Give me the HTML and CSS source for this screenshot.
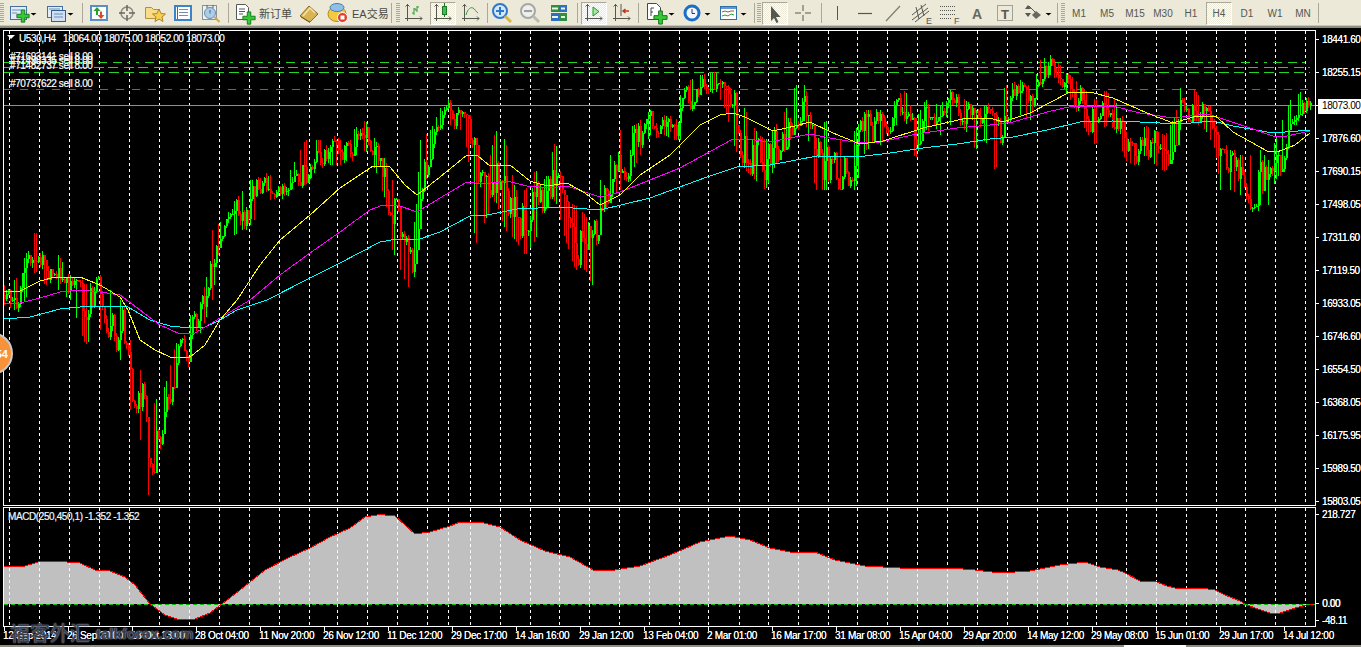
FILE: index.html
```html
<!DOCTYPE html>
<html lang="zh">
<head>
<meta charset="utf-8">
<title>U530,H4</title>
<link rel="stylesheet" href="styles.css">
</head>
<body>
<svg class="defs" width="0" height="0" aria-hidden="true">
  <defs>
    <symbol id="plus" viewBox="-1 -1 16 16"><path d="M5 0h4v5h5v4H9v5H5V9H0V5h5z" fill="#35c935" stroke="#15701a" stroke-width="1"/></symbol>
    <symbol id="axes" viewBox="0 0 24 24"><path d="M5.500 3v17M3 17.500h17M3.500 5.500l2-2 2 2M18 15.500l2 2-2 2" fill="none" stroke="#55584f" stroke-width="1"/></symbol>
  </defs>
</svg>

<header class="toolbar">
  <span class="grip"></span>
  <span class="split s-a">
    <svg class="ico" viewBox="0 0 24 24"><rect x="4.500" y="5.500" width="16" height="13" fill="#e3edf9" stroke="#44709f"/><path d="M6 9h9M6 12h5" stroke="#6f8fb0"/><use href="#plus" x="10" y="8" width="14" height="14"/></svg>
    <span class="caret"></span>
  </span>
  <span class="split s-b">
    <svg class="ico" viewBox="0 0 24 24"><rect x="4.500" y="5.500" width="15" height="11" fill="#e3edf9" stroke="#44709f"/><rect x="8.500" y="9.500" width="14" height="11" fill="#cfe0f4" stroke="#2f5f95"/><path d="M6 8h11M11 13h9M11 16h9" stroke="#6f8fb0"/></svg>
    <span class="caret"></span>
  </span>
  <span class="sep sep-7"></span>
  <span class="run m-2">
    <span class="btn"><svg class="ico" viewBox="0 0 24 24"><rect x="4" y="5" width="16" height="14" fill="#fff" stroke="#5b90c5" stroke-width="2"/><path d="M10 6l-3.500 4H9v4h2v-4h2.500z" fill="#2aa02a"/><path d="M14 18l3.500-4H15v-3.500h-2V14h-2.500z" fill="#d8492a"/></svg></span>
    <span class="btn"><svg class="ico" viewBox="0 0 24 24"><circle cx="12" cy="12" r="6" fill="none" stroke="#8a8a80" stroke-width="1.500"/><path d="M12 4v6M12 14v6M4 12h6M14 12h6" stroke="#66665e" stroke-width="1.500"/></svg></span>
    <span class="btn"><svg class="ico" viewBox="0 0 24 24"><path d="M2.500 6.500h6l2 2h6v9h-14z" fill="#f7dc8a" stroke="#b28f3a"/><path d="M16 8l2 4.500 4.500.5-3.500 3 1 4.500-4-2.400-4 2.400 1-4.500-3.500-3 4.500-.5z" fill="#f6cf4f" stroke="#a8842c"/></svg></span>
    <span class="btn"><svg class="ico" viewBox="0 0 24 24"><rect x="4" y="5" width="16" height="14" fill="#fff" stroke="#3d83c9" stroke-width="2"/><path d="M6.500 6v12" stroke="#2f6fb0"/><path d="M8 8.500h9M8 11.500h9M8 14.500h9" stroke="#7790a8"/></svg></span>
    <span class="btn"><svg class="ico" viewBox="0 0 24 24"><rect x="3.500" y="4.500" width="14" height="14" fill="#eef1f2" stroke="#8d9498"/><circle cx="11" cy="12" r="5.500" fill="#a9cdea" stroke="#6c8ca5"/><path d="M11 9v3.500M8 4v3M14 4v3" stroke="#4d6070"/><path d="M15.500 16l5 5" stroke="#c9a94e" stroke-width="2"/></svg></span>
  </span>
  <span class="sep sep-3"></span>
  <span class="labelled lab-a">
    <svg class="ico" viewBox="0 0 24 24"><path d="M4.500 3.500h9l3 3v12h-12z" fill="#fff" stroke="#55585a"/><path d="M7 8h6M7 10.500h6M7 13h4" stroke="#55585a"/><use href="#plus" x="10" y="10" width="14" height="14"/></svg>
    <span class="tb-text cjk t-new">新订单</span>
  </span>
  <span class="btn m-3"><svg class="ico" viewBox="0 0 24 24"><path d="M3 15l9-10 9 8-8 8z" fill="#d9b455" stroke="#8a6a24"/><path d="M6 15l7-8 5 5" fill="none" stroke="#f3e4a6" stroke-width="1.500"/><path d="M4 16l9 5.500" stroke="#7a5a1c"/></svg></span>
  <span class="labelled lab-b">
    <svg class="ico" viewBox="0 0 24 24"><ellipse cx="11" cy="13" rx="9" ry="7.500" fill="#f4c93f" stroke="#b18a20"/><ellipse cx="11" cy="6.500" rx="7" ry="4" fill="#8cc0e8" stroke="#4c7da8"/><circle cx="16.500" cy="16.500" r="5" fill="#e23b2a" stroke="#fff"/><rect x="14.500" y="14.500" width="4" height="4" fill="#fff"/></svg>
    <span class="tb-text cjk t-ea">EA交易</span>
  </span>
  <span class="sep sep-5"></span>
  <span class="grip g-4"></span>
  <span class="btn"><svg class="ico" viewBox="0 0 24 24"><use href="#axes" width="24" height="24"/><path d="M12 7v7M12 12h-2M12 8h2M15 5v6M15 9h-2M15 6h2" stroke="#2aa035" fill="none"/></svg></span>
  <span class="btn pressed m-1"><svg class="ico" viewBox="0 0 24 24"><use href="#axes" width="24" height="24"/><path d="M13.500 2v14" stroke="#1e7a28"/><rect x="11.500" y="5.500" width="4" height="8" fill="#39c44a" stroke="#1e7a28"/></svg></span>
  <span class="btn"><svg class="ico" viewBox="0 0 24 24"><use href="#axes" width="24" height="24"/><path d="M7 14c2-7 5-8 7-7s3 4 5 5" fill="none" stroke="#2aa035"/></svg></span>
  <span class="sep sep-2"></span>
  <span class="btn"><svg class="ico" viewBox="0 0 24 24"><circle cx="10" cy="10" r="7" fill="#d5e8fa" stroke="#2f78c9" stroke-width="2"/><path d="M6 10h8M10 6v8" stroke="#2f78c9" stroke-width="2"/><path d="M15 15l6 6" stroke="#d8b44a" stroke-width="3"/></svg></span>
  <span class="btn"><svg class="ico" viewBox="0 0 24 24"><circle cx="10" cy="10" r="7" fill="#eeeeea" stroke="#a4a8a8" stroke-width="2"/><path d="M6 10h8" stroke="#9a9e9e" stroke-width="2"/><path d="M15 15l6 6" stroke="#b8bab4" stroke-width="3"/></svg></span>
  <span class="btn m-1"><svg class="ico" viewBox="0 0 24 24"><rect x="4" y="4" width="8" height="7" fill="#2f8f3f"/><rect x="12" y="4" width="8" height="7" fill="#2f6fc0"/><rect x="4" y="12" width="8" height="8" fill="#2f6fc0"/><rect x="12" y="12" width="8" height="8" fill="#2f8f3f"/><path d="M5 7.500h6M14 7.500h4M5 16h6M14 16h4" stroke="#e8f4e8" stroke-width="2"/></svg></span>
  <span class="sep sep-4"></span>
  <span class="btn pressed m-2"><svg class="ico" viewBox="0 0 24 24"><use href="#axes" width="24" height="24"/><path d="M11 6l6 4.500-6 4.500z" fill="#a8e8a0" stroke="#1f9a2a"/></svg></span>
  <span class="btn"><svg class="ico" viewBox="0 0 24 24"><use href="#axes" width="24" height="24"/><path d="M11 3v12" stroke="#55584f"/><path d="M13 10h6M15.500 8l-2.500 2 2.500 2" fill="none" stroke="#b53a20" stroke-width="1.500"/></svg></span>
  <span class="sep sep-2"></span>
  <span class="split s-c">
    <svg class="ico" viewBox="0 0 24 24"><path d="M3.500 2.500h9l4 4v12h-13z" fill="#fff" stroke="#44484a"/><path d="M7 7v8M7 7h3M7 11h2" stroke="#44484a"/><use href="#plus" x="9" y="9" width="15" height="15"/></svg>
    <span class="caret"></span>
  </span>
  <span class="split s-c">
    <svg class="ico" viewBox="0 0 24 24"><circle cx="12" cy="12" r="7" fill="#f4f8fc" stroke="#1b6fc7" stroke-width="3"/><path d="M12 8v4.500h3" fill="none" stroke="#2a3a50"/></svg>
    <span class="caret"></span>
  </span>
  <span class="split s-c">
    <svg class="ico" viewBox="0 0 24 24"><rect x="4.500" y="5.500" width="16" height="13" fill="#fff" stroke="#2f6fa8"/><rect x="5" y="6" width="15" height="2" fill="#5d9ad0"/><path d="M6 11l3-1 3 1 3-1 3 0" fill="none" stroke="#c9442a"/><path d="M6 15l3-1 3 1 3-2 3 1" fill="none" stroke="#2aa035"/></svg>
    <span class="caret"></span>
  </span>
  <span class="sep sep-7"></span>
  <span class="grip g-2"></span>
  <span class="btn pressed"><svg class="ico" viewBox="0 0 24 24"><path d="M8 5v15l3-3 2.500 5 2-1-2.500-5h4.500z" fill="#55584f"/></svg></span>
  <span class="btn"><svg class="ico" viewBox="0 0 24 24"><path d="M12 4v6M12 14v6M4 12h6M14 12h6" stroke="#55584f"/></svg></span>
  <span class="sep sep-4"></span>
  <span class="run m-1">
    <span class="btn"><svg class="ico" viewBox="0 0 24 24"><path d="M12.500 5v14" stroke="#55584f"/></svg></span>
    <span class="btn"><svg class="ico" viewBox="0 0 24 24"><path d="M5 12.500h14" stroke="#55584f" stroke-width="1.200"/></svg></span>
    <span class="btn"><svg class="ico" viewBox="0 0 24 24"><path d="M5 20L19 5" stroke="#7a7d74" stroke-width="1.200"/></svg></span>
    <span class="btn"><svg class="ico" viewBox="0 0 24 24"><path d="M3 14L17 3M3 19L19 7M6 21l14-11M7 6l3 12M12 4l3 11" stroke="#55584f" fill="none"/><text class="ico-letter" x="17" y="22.500">E</text></svg></span>
    <span class="btn"><svg class="ico" viewBox="0 0 24 24"><path d="M3 5.500h15M3 9.500h15M3 13.500h15M3 17.500h11" stroke="#55584f" stroke-dasharray="1 1"/><text class="ico-letter" x="17" y="22.500">F</text></svg></span>
    <span class="btn"><svg class="ico" viewBox="0 0 24 24"><text class="ico-a" x="12" y="18">A</text></svg></span>
    <span class="btn"><svg class="ico" viewBox="0 0 24 24"><rect x="4.500" y="4.500" width="15" height="15" fill="none" stroke="#55584f" stroke-dasharray="1 1"/><text class="ico-t" x="12" y="18">T</text></svg></span>
  </span>
  <span class="split s-d">
    <svg class="ico" viewBox="0 0 24 24"><path d="M4 8l3-4 3 4zM4 12l3 4 3-4z" fill="#55584f"/><path d="M8 5l8 8" stroke="#55584f"/><path d="M15 10l5 4-5 4-4-4z" fill="#66695f"/></svg>
    <span class="caret"></span>
  </span>
  <span class="sep sep-5"></span>
  <span class="grip g-3"></span>
  <nav class="periods">
    <span class="btn per">M1</span>
    <span class="btn per">M5</span>
    <span class="btn per">M15</span>
    <span class="btn per">M30</span>
    <span class="btn per">H1</span>
    <span class="btn per pressed">H4</span>
    <span class="btn per">D1</span>
    <span class="btn per">W1</span>
    <span class="btn per">MN</span>
  </nav>
  <span class="sep sep-1"></span>
</header>

<main class="terminal">
  <section class="row row-price">
    <div class="plot plot-price">
      <svg class="chart" id="price" viewBox="4 31 1311 474" width="1311" height="474">
        <g id="price-grid"></g>
        <path class="lvl lvl-a" d="M4 62.500H1310"/>
        <path class="lvl lvl-b" d="M4 67.500H1310"/>
        <path class="lvl lvl-c" d="M4 72.500H1310"/>
        <path class="lvl lvl-d" d="M4 89.500H1310"/>
        <path class="bid" d="M4 105.500H1315"/>
        <g id="candles"></g>
        <polyline class="ma ma-c" points="4,319 30,317 60,309 80,307 100,306 128,307 150,320 170,326 190,328 205,327 220,320 237,310 267,300 310,278 340,263 380,242 397,239 417,240 440,232 470,216 487,215 517,209 560,207 600,210 650,198 707,177 737,167 770,165 817,156 857,157 890,153 923,148 957,144 990,139 1013,137 1047,130 1080,122 1113,121 1140,122 1180,124 1213,121 1233,126 1273,133 1310,130"/>
        <polyline class="ma ma-m" points="4,303 20,303 40,298 60,292 80,290 100,292 120,295 140,310 160,325 180,334 195,333 220,318 250,300 280,275 310,253 340,232 370,210 383,205 397,205 417,212 440,198 467,182 483,184 507,181 527,186 550,188 567,186 600,197 620,192 680,168 733,139 747,139 770,142 810,134 830,138 860,143 880,142 917,134 957,128 990,125 1013,122 1047,112 1073,106 1113,106 1140,113 1173,118 1207,114 1220,118 1247,127 1273,136 1287,136 1310,131"/>
        <polyline class="ma ma-y" points="4,291 20,291 40,281 55,277 80,277 100,285 120,297 128,310 140,340 155,350 170,357 190,357 205,345 220,320 237,300 260,265 280,240 310,215 340,188 373,166 390,167 405,185 417,195 440,177 467,155 478,156 490,166 510,165 530,181 547,186 567,183 585,193 600,205 620,195 640,175 670,155 700,125 720,115 733,113 745,117 773,131 795,126 810,122 833,133 860,144 883,141 923,128 967,118 990,118 1003,122 1030,113 1070,92 1090,92 1113,98 1147,113 1173,123 1197,116 1217,117 1233,132 1267,151 1277,152 1295,145 1310,133"/>
        <text class="lab" x="19" y="41.500">U530,H4</text>
        <path class="tri" d="M7 35h8l-4 4z"/>
        <text class="lab" x="63" y="41.500">18064.00</text>
        <text class="lab" x="104" y="41.500">18075.00</text>
        <text class="lab" x="145" y="41.500">18052.00</text>
        <text class="lab" x="186" y="41.500">18073.00</text>
        <text class="lab" x="10" y="60">#71693141 sell 8.00</text>
        <text class="lab" x="10" y="64">#71498335 sell 8.00</text>
        <text class="lab" x="10" y="69">#71482737 sell 8.00</text>
        <text class="lab" x="10" y="87">#70737622 sell 8.00</text>
      </svg>
    </div>
    <ul class="axis axis-price">
      <li>18441.60</li><li>18255.15</li><li class="current">18073.00</li><li>17876.60</li><li>17690.15</li>
      <li>17498.05</li><li>17311.60</li><li>17119.50</li><li>16933.05</li><li>16746.60</li>
      <li>16554.50</li><li>16368.05</li><li>16175.95</li><li>15989.50</li><li>15803.05</li>
    </ul>
  </section>

  <section class="row row-macd">
    <div class="plot plot-macd">
      <svg class="chart" id="macd" viewBox="4 508 1311 118" width="1311" height="118">
        <polygon class="hist" points="4,604 4,566.500 18,566.500 25,566 40,561.500 60,561.500 80,563 95,570 110,571 125,577 135,585 150,604 165,615 180,620 195,619 210,613 222,604 240,590 265,570 290,557 310,548 330,537 350,528 365,517 380,514.500 395,516 405,525 415,534 430,532 450,526 460,522 480,522 500,527 520,540 545,551 570,557 595,571 615,570 640,566 670,555 700,542 730,536 750,540 770,548 790,552 815,552 835,560 865,566 900,568 950,568 975,570 1000,573 1030,571 1060,565 1085,562 1100,567 1118,570 1125,573 1140,581 1157,582 1167,586 1175,588 1190,589 1200,588 1215,590 1225,595 1240,601 1245,604 1255,608 1270,613 1280,613 1295,608 1310,604 1314,604"/>
        <g id="macd-grid"></g>
        <polyline class="hist-line" points="4,566.500 18,566.500 25,566 40,561.500 60,561.500 80,563 95,570 110,571 125,577 135,585 150,604 165,615 180,620 195,619 210,613 222,604 240,590 265,570 290,557 310,548 330,537 350,528 365,517 380,514.500 395,516 405,525 415,534 430,532 450,526 460,522 480,522 500,527 520,540 545,551 570,557 595,571 615,570 640,566 670,555 700,542 730,536 750,540 770,548 790,552 815,552 835,560 865,566 900,568 950,568 975,570 1000,573 1030,571 1060,565 1085,562 1100,567 1118,570 1125,573 1140,581 1157,582 1167,586 1175,588 1190,589 1200,588 1215,590 1225,595 1240,601 1245,604 1255,608 1270,613 1280,613 1295,608 1310,604 1314,604"/>
        <path class="zero" d="M4 604.500H1315"/>
        <text class="lab lab-macd" x="8" y="519.500">MACD(250,450,1) -1.352 -1.352</text>
      </svg>
    </div>
    <ul class="axis axis-macd">
      <li>218.727</li><li class="bold">0.00</li><li>-48.11</li>
    </ul>
  </section>

  <ol class="time-axis">
    <li>12 Sep 2014</li><li>26 Sep 20:00</li><li>13 Oct 13:00</li><li>28 Oct 04:00</li><li>11 Nov 20:00</li><li>26 Nov 12:00</li><li>11 Dec 12:00</li>
    <li>29 Dec 17:00</li><li>14 Jan 16:00</li><li>29 Jan 12:00</li><li>13 Feb 04:00</li><li>2 Mar 01:00</li><li>16 Mar 17:00</li><li>31 Mar 08:00</li>
    <li>15 Apr 04:00</li><li>29 Apr 20:00</li><li>14 May 12:00</li><li>29 May 08:00</li><li>15 Jun 01:00</li><li>29 Jun 17:00</li><li>14 Jul 12:00</li>
  </ol>

  <div class="tabstrip"><span class="tab-active"></span></div>

  <div class="badge">54</div>
  <div class="watermark"><span class="wm-cjk">福客外汇</span><span class="wm-lat">talkforex.com</span></div>
</main>
<script src="chart.js"></script>
</body>
</html>
```

FILE: styles.css
```css
* { box-sizing: border-box; }
html, body { margin: 0; height: 647px; overflow: hidden; background: #000; }
body { font-family: "Liberation Sans", Arial, sans-serif; }
.defs { position: absolute; }

/* toolbar */
.toolbar {
  display: flex; align-items: center; height: 28px;
  background: #ece9d8;
  border-bottom: 2px solid #8e8c7e;
  box-shadow: inset 0 -1px 0 #c9c6b6;
  color: #55584f;
}
.ico { width: 24px; height: 24px; display: block; flex: none; }
.grip {
  width: 4px; height: 20px; flex: none;
  background: repeating-linear-gradient(#aca899 0 1px, #ece9d8 1px 2px);
}
.g-4 { margin-left: 4px; }
.g-2 { margin-left: 2px; }
.g-3 { margin-left: 3px; }
.sep { width: 1px; height: 20px; background: #aca899; flex: none; }
.sep-1 { margin-left: 1px; }
.sep-2 { margin-left: 2px; }
.sep-3 { margin-left: 3px; }
.sep-4 { margin-left: 4px; }
.sep-5 { margin-left: 5px; }
.sep-7 { margin-left: 7px; }
.btn {
  width: 26px; height: 23px; margin: 0 1px; flex: none;
  display: flex; align-items: center; justify-content: center;
  border: 1px solid transparent;
}
.btn .ico { margin: -1px; }
.pressed {
  border-color: #aca899 #fff #fff #aca899;
  background: repeating-conic-gradient(#fff 0 25%, #ece9d8 0 50%) 0 0 / 2px 2px;
}
.btn.m-1 { margin-left: 2px; }
.run { display: flex; flex: none; }
.run.m-2 { margin-left: 2px; }
.run.m-1 { margin-left: 1px; }
.btn.m-2 { margin-left: 3px; }
.btn.m-3 { margin-left: 4px; }
.split { display: flex; align-items: center; flex: none; }
.s-a { margin-left: 2px; }
.s-b { margin-left: 5px; }
.s-c { margin-left: 5px; }
.s-d { margin-left: 2px; }
.caret {
  width: 7px; height: 3px; flex: none;
  background: #000;
  clip-path: polygon(0 0, 7px 0, 3.500px 100%);
  margin-top: 2px;
}
.s-a .caret, .s-b .caret { width: 8px; }
.labelled { display: flex; align-items: center; flex: none; }
.lab-a { margin-left: 3px; }
.lab-b { margin-left: 3px; }
.tb-text { font-size: 11px; color: #4a4a45; white-space: nowrap; }
.cjk { font-family: "Liberation Sans", "Noto Sans CJK SC", sans-serif; }
.t-new { margin-left: 3px; width: 33px; }
.t-ea { margin-left: 2px; width: 34px; }
.periods { display: flex; flex: none; }
.per { font-size: 10px; color: #55584f; }
.ico-letter { font: 9px "Liberation Sans", sans-serif; fill: #55584f; }
.ico-a { font: bold 14px "Liberation Sans", sans-serif; fill: #66695f; text-anchor: middle; }
.ico-t { font: bold 13px "Liberation Sans", sans-serif; fill: #55584f; text-anchor: middle; }

/* terminal */
.terminal { position: relative; height: 619px; padding: 2px 0 0 3px; overflow: hidden; }
.row { display: flex; }
.row-price { height: 476px; }
.row-macd { height: 120px; margin-top: 1px; }
.plot { width: 1313px; border: 1px solid #fff; flex: none; background: #000; }
.chart { display: block; overflow: hidden; }

.lvl { fill: none; stroke-width: 1; shape-rendering: crispEdges; }
.lvl-a { stroke: #22d322; stroke-dasharray: 9 6 9 5 3 6 3 6; }
.lvl-b { stroke: #22d322; stroke-dasharray: 10 4 10 6; }
.lvl-c { stroke: #22d322; stroke-dasharray: 10 5; }
.lvl-d { stroke: #229a22; stroke-dasharray: 8 8; }
.bid { stroke: #8f8f8f; stroke-width: 1; shape-rendering: crispEdges; }
.grid-line { stroke: #fff; stroke-width: 1; stroke-dasharray: 3 3; shape-rendering: crispEdges; fill: none; }
.ma { fill: none; stroke-width: 1; shape-rendering: crispEdges; }
.ma-y { stroke: #ffff00; }
.ma-m { stroke: #ff00ff; }
.ma-c { stroke: #00ffff; }
.tri { fill: #fff; }
.lab { font: 10px "Liberation Sans", sans-serif; letter-spacing: -.4px; fill: #fff; stroke: #fff; stroke-width: .2px; }
.lab-macd { fill: #e6f2ff; }
.up { stroke: #00ff00; }
.dn { stroke: #ff0000; }
.wick { stroke-width: 1; shape-rendering: crispEdges; fill: none; }
.body { stroke-width: 2; shape-rendering: crispEdges; fill: none; }
.hist { fill: #c0c0c0; }
.hist-line { fill: none; stroke: #ff0000; stroke-width: 1; shape-rendering: crispEdges; }
.zero { stroke: #00c000; stroke-width: 1; stroke-dasharray: 4 3; shape-rendering: crispEdges; }

/* axes */
.axis {
  list-style: none; margin: 0; padding: 0;
  color: #fff; font-size: 10px; letter-spacing: -.4px; line-height: 9px;
  flex: 1; min-width: 0; white-space: nowrap; text-shadow: 0 0 .6px #fff;
}
.axis li { display: flex; }
.axis li::before {
  content: ""; width: 3px; height: 1px; background: #fff; margin-right: 3px; flex: none; margin-top: 4px;
}
.axis-price { padding-top: 5px; }
.axis-price li { height: 33px; }
.axis-price li:last-child { height: 9px; }
.axis-price .current { position: relative; z-index: 1; }
.axis-price .current::after {
  content: "18073.00"; position: absolute; left: 2px; top: -2px; width: 44px; height: 13px;
  padding: 2px 0 0 4px; background: #fff; color: #000; text-shadow: none;
}
.axis-macd { padding-top: 3px; }
.axis-macd li:nth-child(1) { height: 89px; }
.axis-macd li:nth-child(2) { height: 17px; }
.axis-macd .bold { text-shadow: .6px 0 0 #fff; }

.time-axis {
  list-style: none; margin: 0; padding: 0; display: flex;
  color: #fff; font-size: 10px; letter-spacing: -.3px; line-height: 9px;
  height: 18px; white-space: nowrap; text-shadow: 0 0 .6px #fff;
}
.time-axis li { width: 64px; flex: none; }
.time-axis li::before { content: ""; display: block; width: 1px; height: 4px; background: #fff; margin-left: 1px; }

.tabstrip { height: 2px; margin-left: -3px; background: #8f8d80; display: flex; }
.tab-active { width: 62px; height: 2px; margin-left: 1124px; background: #fff; }

.badge {
  position: absolute; left: -30px; top: 304px; width: 43px; height: 43px;
  border-radius: 50%; background: #f7913a; border: 2px solid #c9c9c9;
  display: flex; align-items: center; justify-content: flex-end; padding-right: 3px;
  color: #fff; font: bold 11px "Liberation Sans", sans-serif;
}
.watermark {
  position: absolute; left: 10px; bottom: 1px; display: flex; align-items: flex-end; gap: 6px;
  color: #3a3c44; text-shadow: 0 0 1px #9aa8c4, 0 0 2px #6c7a96; white-space: nowrap; pointer-events: none;
}
.wm-cjk { font: 20px/26px "Noto Sans CJK SC", sans-serif; }
.wm-lat { font: bold 15px/18px "Liberation Sans", sans-serif; margin-bottom: 3px; }
```

FILE: chart.js
```js
(function () {
  var NS = "http://www.w3.org/2000/svg";
  var gridX = [9,39,69,99,129,159,189,219,249,279,309,337,367,397,427,448,470,500,530,559,589,619,649,679,708,739,768,798,828,857,887,917,947,977,1007,1037,1067,1096,1126,1156,1186,1216,1245,1275,1305];
  function el(parent, cls, d) {
    var p = document.createElementNS(NS, "path");
    p.setAttribute("class", cls);
    p.setAttribute("d", d);
    parent.appendChild(p);
  }
  function grid(id, y0, y1) {
    var g = document.getElementById(id);
    el(g, "grid-line", gridX.map(function (x) { return "M" + (x + .5) + " " + y0 + "V" + y1; }).join(""));
  }
  grid("price-grid", 31, 505);
  grid("macd-grid", 508, 626);

  /* hand-read price envelope of the reference: x, high, low */
  var env = [[4,285,305],[15,280,310],[25,255,300],[35,230,270],[45,262,285],[58,255,290],[70,275,300],[85,285,345],[100,275,330],[110,290,340],[120,300,360],[130,340,410],[140,370,440],[148,420,495],[155,400,470],[165,385,420],[175,345,385],[190,315,360],[205,285,320],[212,230,300],[220,222,240],[235,200,235],[250,180,225],[270,175,200],[290,170,190],[305,140,185],[320,140,165],[340,140,165],[355,128,155],[365,120,150],[375,140,170],[385,160,200],[392,180,250],[400,215,270],[408,235,287],[415,220,275],[420,140,200],[430,130,160],[440,108,130],[450,100,125],[460,110,130],[467,115,150],[475,140,245],[485,180,220],[495,130,200],[505,140,230],[515,190,240],[525,190,255],[535,170,240],[545,180,210],[555,140,200],[565,200,240],[575,205,270],[585,215,270],[592,230,285],[600,180,220],[610,155,200],[620,130,190],[635,125,165],[650,110,135],[665,115,135],[675,125,140],[680,95,140],[690,80,110],[700,75,92],[715,72,90],[725,85,110],[735,90,150],[745,110,170],[755,130,180],[765,140,190],[775,125,165],[785,110,150],[795,85,130],[805,85,120],[815,140,190],[825,120,190],[840,140,190],[855,130,190],[865,110,150],[880,110,145],[895,100,125],[905,90,120],[915,120,160],[925,100,130],[940,105,135],[950,90,125],[965,100,130],[975,110,150],[985,105,140],[995,115,172],[1005,85,125],[1020,80,115],[1030,95,120],[1040,60,85],[1050,55,75],[1060,65,85],[1070,75,100],[1085,90,130],[1095,100,145],[1105,90,125],[1115,100,130],[1125,130,160],[1135,145,165],[1145,125,155],[1155,130,165],[1165,135,172],[1175,115,150],[1180,88,130],[1195,90,120],[1205,105,130],[1215,120,150],[1220,148,190],[1230,150,190],[1240,155,195],[1250,155,210],[1260,150,205],[1268,160,205],[1275,140,180],[1282,120,170],[1290,100,125],[1300,92,115],[1312,100,112]];

  var seed = 20150714;
  function rnd() {
    seed |= 0; seed = seed + 0x6D2B79F5 | 0;
    var t = Math.imul(seed ^ seed >>> 15, 1 | seed);
    t = t + Math.imul(t ^ t >>> 7, 61 | t) ^ t;
    return ((t ^ t >>> 14) >>> 0) / 4294967296;
  }
  function at(x) {
    for (var i = 1; i < env.length; i++) {
      if (x <= env[i][0]) {
        var a = env[i - 1], b = env[i], f = (x - a[0]) / (b[0] - a[0]);
        return [a[1] + (b[1] - a[1]) * f, a[2] + (b[2] - a[2]) * f];
      }
    }
    return [env[env.length - 1][1], env[env.length - 1][2]];
  }
  function nearAnchor(x) {
    return env.some(function (a) { return Math.abs(a[0] - x) <= 1; });
  }
  var host = document.getElementById("candles");
  var open = 295;
  for (var x = 4; x < 1312; x += 2) {
    var e = at(x), hi = e[0], lo = e[1], mid = (hi + lo) / 2, amp = lo - hi;
    var close = open + (rnd() - .5) * amp * .9 + (mid - open) * .35;
    close = Math.max(hi + 1, Math.min(lo - 1, close));
    var top = Math.min(open, close), bot = Math.max(open, close);
    var pin = nearAnchor(x);
    var wTop = pin || rnd() < .18 ? hi : top - rnd() * 5;
    var wBot = pin || rnd() < .18 ? lo : bot + rnd() * 5;
    var cls = close < open ? "up" : "dn";
    el(host, "wick " + cls, "M" + (x + .5) + " " + Math.round(wTop) + "V" + Math.round(wBot));
    el(host, "body " + cls, "M" + (x + 1) + " " + Math.round(top) + "V" + Math.round(Math.max(bot, top + 1)));
    open = close;
  }
})();
```
